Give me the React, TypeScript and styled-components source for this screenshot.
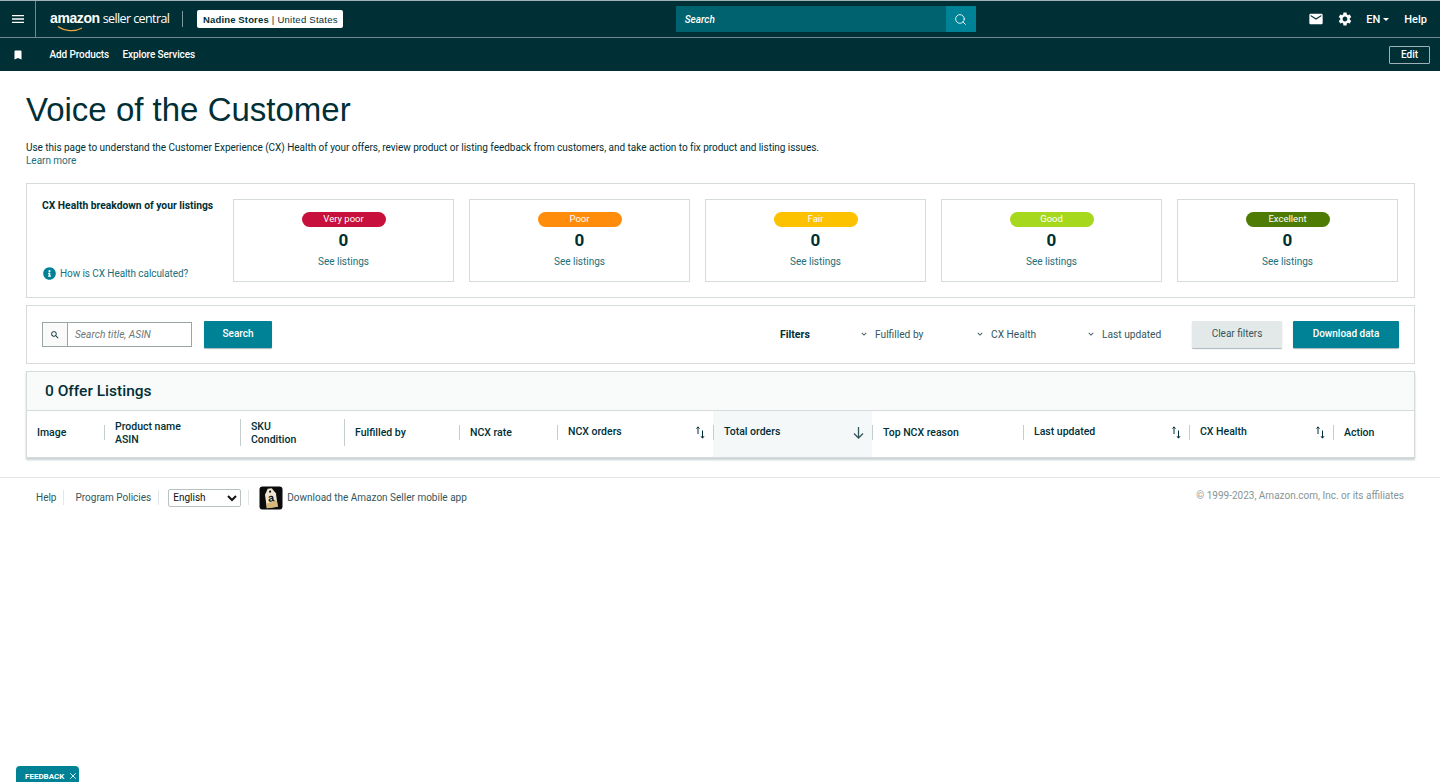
import styled, { createGlobalStyle } from "styled-components";
import { MdBookmark, MdEmail, MdExpandMore, MdMenu, MdSearch, MdSettings } from "react-icons/md";
import { FaInfoCircle } from "react-icons/fa";
import { Search, X } from "lucide-react";

const GlobalStyle = createGlobalStyle`
  html, body {
    margin: 0;
    padding: 0;
    background: #fff;
    color: #002f36;
    font-family: "Roboto", "Liberation Sans", sans-serif;
    font-size: 10px;
  }
  * { box-sizing: border-box; }
`;

const Page = styled.div`
  position: relative;
  height: 782px;
  overflow: hidden;
`;

/* --- header --- */
const TopBar = styled.div`
  display: flex;
  align-items: center;
  height: 38px;
  background: #002f36;
  border-top: 1px solid #9fb2b5;
  border-bottom: 1px solid #6f8a8e;
  color: #fff;
`;

const MenuCell = styled.div`
  display: flex;
  align-items: center;
  justify-content: center;
  width: 36px;
  height: 100%;
  border-right: 1px solid #6f8a8e;
  font-size: 16px;
`;

const Logo = styled.div`
  position: relative;
  display: flex;
  align-items: baseline;
  gap: 3px;
  margin-left: 14px;
  width: 132px;
  height: 22px;
  line-height: 20px;
`;

const LogoBold = styled.span`
  font-family: "Liberation Sans", sans-serif;
  font-size: 14px;
  font-weight: 700;
  letter-spacing: -0.4px;
`;

const LogoLight = styled.span`
  font-family: "Open Sans", sans-serif;
  font-size: 12.5px;
  letter-spacing: -0.6px;
  white-space: nowrap;
`;

const Smile = styled.svg`
  position: absolute;
  left: 7px;
  top: 17px;
  width: 28px;
  height: 8px;
`;

const Divider = styled.div`
  width: 1px;
  height: 16px;
  margin-right: 14px;
  background: #7f9a9e;
`;

const StoreChip = styled.div`
  display: flex;
  align-items: center;
  height: 18px;
  padding: 0 5px 0 6px;
  border-radius: 2px;
  background: #fff;
  color: #002f36;
  font-family: "Liberation Sans", sans-serif;
  font-size: 9.5px;
  letter-spacing: 0.25px;
  white-space: nowrap;

  b { font-weight: 700; margin-right: 3px; letter-spacing: 0.15px; }
`;

const SearchWrap = styled.div`
  display: flex;
  width: 300px;
  height: 26px;
  margin-left: 333px;
`;

const SearchField = styled.div`
  flex: 1;
  display: flex;
  align-items: center;
  padding-left: 9px;
  background: #00626e;
  font-size: 10px;
  font-style: italic;
  font-weight: 500;
`;

const SearchBtn = styled.div`
  display: flex;
  align-items: center;
  justify-content: center;
  width: 30px;
  background: #008296;
`;

const TopRight = styled.div`
  display: flex;
  align-items: center;
  margin-left: auto;
  padding-right: 13px;
  font-size: 11px;
  font-weight: 500;
`;

const TopIcon = styled.span<{ $gap: number }>`
  display: flex;
  margin-right: ${(p) => p.$gap}px;
  font-size: 16px;
`;

const Lang = styled.span`
  display: flex;
  align-items: center;
  gap: 3px;
  margin: 0 15px 0 2px;

  i {
    width: 0;
    height: 0;
    border-left: 3px solid transparent;
    border-right: 3px solid transparent;
    border-top: 3px solid #fff;
  }
`;

const SubBar = styled.div`
  display: flex;
  align-items: center;
  height: 33px;
  background: #002f36;
  color: #fff;
  padding-right: 10px;
  font-size: 10px;
  font-weight: 500;
`;

const BookmarkCell = styled.div`
  display: flex;
  justify-content: center;
  width: 36px;
  font-size: 12px;
`;

const SubLink = styled.span`
  margin-left: 13.5px;
  letter-spacing: -0.1px;
`;

const EditBtn = styled.div`
  display: flex;
  align-items: center;
  justify-content: center;
  width: 41px;
  height: 18px;
  margin-left: auto;
  border: 1px solid #9fb2b5;
  border-radius: 1px;
`;

/* --- content --- */
const Main = styled.main`
  padding: 0 25px 0 26px;
`;

const Title = styled.h1`
  margin: 20px 0 0;
  font-family: "Liberation Sans", sans-serif;
  font-size: 33px;
  font-weight: 400;
  line-height: 38px;
`;

const Intro = styled.p`
  margin: 12px 0 0;
  font-size: 10px;
  line-height: 13px;
  height: 26px;
  letter-spacing: -0.03px;
`;

const TealLink = styled.a`
  color: #1a6f7a;
`;

const Panel = styled.section`
  display: flex;
  align-items: center;
  border: 1px solid #d5dbdb;
`;

const HealthPanel = styled(Panel)`
  margin-top: 16px;
  height: 115px;
  padding: 15px 16px 15px 15px;
  align-items: stretch;
`;

const HealthInfo = styled.div`
  display: flex;
  flex-direction: column;
  justify-content: space-between;
  width: 191px;
  flex: none;
`;

const HealthTitle = styled.div`
  font-size: 10.3px;
  font-weight: 700;
  line-height: 14px;
`;

const HowLink = styled.div`
  display: flex;
  align-items: center;
  gap: 4px;
  margin: 0 0 2px 1px;
  color: #1a6f7a;
  font-size: 10px;
  letter-spacing: -0.08px;

  svg { color: #008296; font-size: 13px; }
`;

const HealthCards = styled.div`
  flex: 1;
  display: grid;
  grid-template-columns: repeat(5, 221px);
  gap: 15px;
`;

const HealthCard = styled.div`
  display: flex;
  flex-direction: column;
  align-items: center;
  height: 83px;
  padding-top: 12px;
  border: 1px solid #d5dbdb;
`;

const Pill = styled.div<{ $bg: string }>`
  display: flex;
  align-items: center;
  justify-content: center;
  width: 84px;
  height: 15px;
  padding-bottom: 2px;
  border-radius: 8px;
  background: ${(p) => p.$bg};
  color: #fff;
  font-size: 9.5px;
`;

const HealthCount = styled.div`
  margin-top: 3px;
  font-size: 17px;
  font-weight: 700;
  line-height: 20px;
`;

const SeeLink = styled(TealLink)`
  margin-top: 5px;
  font-size: 10px;
  line-height: 13px;
`;

const FilterPanel = styled(Panel)`
  margin-top: 7px;
  height: 59px;
  padding: 0 15px;
`;

const SearchBox = styled.div`
  display: flex;
  width: 150px;
  height: 25px;
  border: 1px solid #9aa5a6;
`;

const SearchAddon = styled.div`
  display: flex;
  align-items: center;
  justify-content: center;
  width: 25px;
  border-right: 1px solid #9aa5a6;
  background: #fafafa;
  font-size: 10px;
`;

const SearchHint = styled.div`
  display: flex;
  align-items: center;
  padding-left: 7px;
  color: #6c7778;
  font-size: 10.2px;
  font-style: italic;
`;

const Button = styled.div<{ $light?: boolean; $w: number }>`
  display: flex;
  align-items: center;
  justify-content: center;
  flex: none;
  width: ${(p) => p.$w}px;
  height: 27px;
  padding-bottom: 2px;
  border-radius: 1px;
  background: ${(p) => (p.$light ? "#e3e9e9" : "#008296")};
  color: ${(p) => (p.$light ? "#33575c" : "#fff")};
  box-shadow: 0 1px 1px rgba(0, 47, 54, 0.35);
  font-size: 10px;
  font-weight: ${(p) => (p.$light ? 400 : 500)};
`;

const SearchSubmit = styled(Button)`
  margin-left: 12px;
`;

const FilterLabel = styled.div`
  margin-left: auto;
  width: 79px;
  padding-bottom: 1px;
  font-size: 10.5px;
  font-weight: 700;
`;

const FilterItem = styled.div<{ $w: number }>`
  display: flex;
  align-items: center;
  gap: 6px;
  width: ${(p) => p.$w}px;
  padding-bottom: 1px;
  color: #33575c;
  font-size: 10.2px;

  svg { font-size: 10px; flex: none; }
`;

const DownloadBtn = styled(Button)`
  margin-left: 11px;
`;

const TableCard = styled.section`
  margin-top: 7px;
  border: 1px solid #d5dbdb;
  box-shadow: 0 2px 2px rgba(0, 47, 54, 0.22);
`;

const TableTitle = styled.div`
  display: flex;
  align-items: center;
  height: 39px;
  padding-left: 18px;
  background: #f9fafa;
  border-bottom: 1px solid #d5dbdb;
  font-size: 15.5px;
  font-weight: 500;
`;

const HeadRow = styled.div`
  display: grid;
  grid-template-columns: 77px 136px 104px 115px 98px 156px 159px 151px 166px 144px 1fr;
  height: 46px;
`;

const HeadCell = styled.div<{ $active?: boolean }>`
  display: flex;
  align-items: center;
  padding-bottom: 3px;
  background: ${(p) => (p.$active ? "#f5f8f8" : "transparent")};
`;

const HeadInner = styled.div<{ $first?: boolean; $tall?: boolean; $raised?: boolean }>`
  flex: 1;
  display: flex;
  justify-content: space-between;
  align-items: center;
  height: ${(p) => (p.$tall ? 27 : 15)}px;
  padding: ${(p) => (p.$raised ? "0 8px 0 10px" : "2px 8px 0 10px")};
  border-left: ${(p) => (p.$first ? "none" : "1px solid #c4cccd")};
  font-size: 10.5px;
  font-weight: 500;
  line-height: 12.5px;
`;

const SortSvg = styled.svg`
  flex: none;
  width: 9px;
  height: 13px;
`;

const DownSvg = styled.svg`
  flex: none;
  width: 11px;
  height: 13px;
`;

/* --- footer --- */
const Footer = styled.footer`
  display: flex;
  align-items: center;
  height: 40px;
  margin-top: 19px;
  padding: 0 36px;
  border-top: 1px solid #e3e6e6;
  color: #33575c;
  font-size: 10px;
`;

const FootItem = styled.span`
  display: flex;
  align-items: center;
  height: 15px;
  padding-right: 7px;
  margin-right: 11px;
  border-right: 1px solid #e3e6e6;
`;

const FootSep = styled(FootItem)`
  padding-right: 0;
  margin-right: 10px;
`;

const LangSelect = styled.select`
  width: 73px;
  height: 18px;
  margin-left: -2px;
  margin-right: 7px;
  border: 1px solid #b8c2c3;
  border-radius: 2px;
  background: #fff;
  color: #111;
  font-family: "Roboto", sans-serif;
  font-size: 10px;
`;

const AppIcon = styled.svg`
  flex: none;
  width: 24px;
  height: 24px;
  margin-right: 4px;
`;

const Copyright = styled.span`
  position: relative;
  top: -2px;
  margin-left: auto;
  color: #879596;
`;

const Feedback = styled.div`
  position: absolute;
  left: 16px;
  bottom: 0;
  display: flex;
  align-items: center;
  gap: 4px;
  width: 63px;
  height: 16px;
  padding: 4px 0 0 9px;
  border-radius: 4px 4px 0 0;
  background: #008296;
  color: #fff;
  font-size: 8px;
  font-weight: 700;
`;

const SortIcon = () => (
  <SortSvg viewBox="0 0 9 13" fill="none" stroke="#002f36" strokeWidth="1">
    <path d="M2 8V1M0.5 2.6L2 0.8 3.5 2.6" />
    <path d="M6.5 4.5V12M5 10.2L6.5 12.2 8 10.2" />
  </SortSvg>
);

const DownIcon = () => (
  <DownSvg viewBox="0 0 11 13" fill="none" stroke="#33575c" strokeWidth="1.3">
    <path d="M5.5 1V12M1 7.5L5.5 12 10 7.5" />
  </DownSvg>
);

const healthLevels = [
  { label: "Very poor", color: "#c7103c" },
  { label: "Poor", color: "#ff8c0a" },
  { label: "Fair", color: "#fcc200" },
  { label: "Good", color: "#a6d81e" },
  { label: "Excellent", color: "#4e7b04" },
];

const columns = [
  { lines: ["Image"] },
  { lines: ["Product name", "ASIN"] },
  { lines: ["SKU", "Condition"], tall: true },
  { lines: ["Fulfilled by"], tall: true },
  { lines: ["NCX rate"] },
  { lines: ["NCX orders"], sort: true },
  { lines: ["Total orders"], active: true },
  { lines: ["Top NCX reason"] },
  { lines: ["Last updated"], sort: true },
  { lines: ["CX Health"], sort: true },
  { lines: ["Action"] },
];

export default function App() {
  return (
    <Page>
      <GlobalStyle />
      <TopBar>
        <MenuCell><MdMenu /></MenuCell>
        <Logo>
          <LogoBold>amazon</LogoBold>
          <LogoLight>seller central</LogoLight>
          <Smile viewBox="0 0 28 8" fill="none">
            <path d="M1 1.5C8 6.5 18 7 25 3" stroke="#e8a33d" strokeWidth="1.4" />
          </Smile>
        </Logo>
        <Divider />
        <StoreChip><b>Nadine Stores</b> | United States</StoreChip>
        <SearchWrap>
          <SearchField>Search</SearchField>
          <SearchBtn><Search size={13} strokeWidth={1.6} /></SearchBtn>
        </SearchWrap>
        <TopRight>
          <TopIcon $gap={13}><MdEmail /></TopIcon>
          <TopIcon $gap={11}><MdSettings /></TopIcon>
          <Lang>EN <i /></Lang>
          <span>Help</span>
        </TopRight>
      </TopBar>
      <SubBar>
        <BookmarkCell><MdBookmark /></BookmarkCell>
        <SubLink>Add Products</SubLink>
        <SubLink>Explore Services</SubLink>
        <EditBtn>Edit</EditBtn>
      </SubBar>

      <Main>
        <Title>Voice of the Customer</Title>
        <Intro>
          Use this page to understand the Customer Experience (CX) Health of your offers, review product or listing feedback from customers, and take action to fix product and listing issues.
          <br />
          <TealLink>Learn more</TealLink>
        </Intro>

        <HealthPanel>
          <HealthInfo>
            <HealthTitle>CX Health breakdown of your listings</HealthTitle>
            <HowLink><FaInfoCircle /> How is CX Health calculated?</HowLink>
          </HealthInfo>
          <HealthCards>
            {healthLevels.map((level) => (
              <HealthCard key={level.label}>
                <Pill $bg={level.color}>{level.label}</Pill>
                <HealthCount>0</HealthCount>
                <SeeLink>See listings</SeeLink>
              </HealthCard>
            ))}
          </HealthCards>
        </HealthPanel>

        <FilterPanel>
          <SearchBox>
            <SearchAddon><MdSearch /></SearchAddon>
            <SearchHint>Search title, ASIN</SearchHint>
          </SearchBox>
          <SearchSubmit $w={68}>Search</SearchSubmit>
          <FilterLabel>Filters</FilterLabel>
          <FilterItem $w={116}><MdExpandMore /> Fulfilled by</FilterItem>
          <FilterItem $w={111}><MdExpandMore /> CX Health</FilterItem>
          <FilterItem $w={106}><MdExpandMore /> Last updated</FilterItem>
          <Button $light $w={90}>Clear filters</Button>
          <DownloadBtn $w={106}>Download data</DownloadBtn>
        </FilterPanel>

        <TableCard>
          <TableTitle>0 Offer Listings</TableTitle>
          <HeadRow>
            {columns.map((col, i) => (
              <HeadCell key={col.lines[0]} $active={col.active}>
                <HeadInner $first={i === 0} $tall={col.tall} $raised={col.sort || col.active}>
                  <span>
                    {col.lines.map((line) => (
                      <div key={line}>{line}</div>
                    ))}
                  </span>
                  {col.sort && <SortIcon />}
                  {col.active && <DownIcon />}
                </HeadInner>
              </HeadCell>
            ))}
          </HeadRow>
        </TableCard>
      </Main>

      <Footer>
        <FootItem>Help</FootItem>
        <FootItem>Program Policies</FootItem>
        <LangSelect defaultValue="English">
          <option>English</option>
        </LangSelect>
        <FootSep />
        <AppIcon viewBox="0 0 24 24">
          <rect x="0.5" y="0.5" width="23" height="23" rx="3" fill="#0b0b0b" />
          <g transform="rotate(-8 12 12)">
            <path d="M6.5 8L10 2.5H14L17.5 8V21.5H6.5Z" fill="#efe6d2" />
            <path d="M6.5 17L17.5 15V21.5H6.5Z" fill="#d8b878" />
            <circle cx="12" cy="5.5" r="1.1" fill="#0b0b0b" />
            <text x="12" y="15.5" textAnchor="middle" fontSize="11" fontWeight="700" fill="#111" fontFamily="Liberation Sans">a</text>
          </g>
        </AppIcon>
        <span>Download the Amazon Seller mobile app</span>
        <Copyright>© 1999-2023, Amazon.com, Inc. or its affiliates</Copyright>
      </Footer>

      <Feedback>FEEDBACK <X size={10} /></Feedback>
    </Page>
  );
}
